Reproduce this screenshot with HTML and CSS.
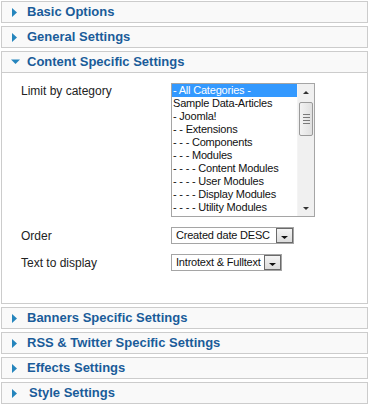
FILE: index.html
```html
<!DOCTYPE html>
<html lang="en">
<head>
  <meta charset="UTF-8">
  <title>Module Parameters</title>
  <link rel="stylesheet" href="styles.css">
</head>
<body>
  <div class="sliders">
    <div class="panel">
      <h3 class="toggler">
        <svg class="arrow" width="16" height="20" viewBox="0 0 16 20"><polygon points="1,6 6,10.5 1,15"/></svg>
        <span class="title">Basic Options</span>
      </h3>
    </div>
    <div class="panel">
      <h3 class="toggler">
        <svg class="arrow" width="16" height="20" viewBox="0 0 16 20"><polygon points="1,6 6,10.5 1,15"/></svg>
        <span class="title">General Settings</span>
      </h3>
    </div>
    <div class="panel open">
      <h3 class="toggler">
        <svg class="arrow" width="16" height="20" viewBox="0 0 16 20"><polygon points="0,7.5 9,7.5 4.5,12"/></svg>
        <span class="title">Content Specific Settings</span>
      </h3>
      <div class="pane">
        <div class="params">
          <label class="param-label param-top">Limit by category</label>
          <div class="listbox">
            <ul class="list">
              <li class="selected">- All Categories -</li>
              <li>Sample Data-Articles</li>
              <li>- Joomla!</li>
              <li>- - Extensions</li>
              <li>- - - Components</li>
              <li>- - - Modules</li>
              <li>- - - - Content Modules</li>
              <li>- - - - User Modules</li>
              <li>- - - - Display Modules</li>
              <li>- - - - Utility Modules</li>
            </ul>
            <div class="scrollbar">
              <div class="sb-btn">
                <svg width="16" height="16" viewBox="0 0 16 16"><polygon points="5,10 11,10 8,7"/></svg>
              </div>
              <div class="sb-thumb">
                <span class="grip"></span>
                <span class="grip"></span>
                <span class="grip"></span>
                <span class="grip"></span>
              </div>
              <div class="sb-track"></div>
              <div class="sb-btn">
                <svg width="16" height="16" viewBox="0 0 16 16"><polygon points="5,7 11,7 8,10"/></svg>
              </div>
            </div>
          </div>

          <label class="param-label">Order</label>
          <div class="dropdown dd-order">
            <span class="dd-text">Created date DESC</span>
            <span class="dd-btn"><svg width="15" height="13" viewBox="0 0 15 13"><polygon points="4,7 11,7 7.5,10"/></svg></span>
          </div>

          <label class="param-label">Text to display</label>
          <div class="dropdown dd-text-display">
            <span class="dd-text">Introtext &amp; Fulltext</span>
            <span class="dd-btn"><svg width="15" height="13" viewBox="0 0 15 13"><polygon points="4,7 11,7 7.5,10"/></svg></span>
          </div>
        </div>
      </div>
    </div>
    <div class="panel">
      <h3 class="toggler">
        <svg class="arrow" width="16" height="20" viewBox="0 0 16 20"><polygon points="1,6 6,10.5 1,15"/></svg>
        <span class="title">Banners Specific Settings</span>
      </h3>
    </div>
    <div class="panel">
      <h3 class="toggler">
        <svg class="arrow" width="16" height="20" viewBox="0 0 16 20"><polygon points="1,6 6,10.5 1,15"/></svg>
        <span class="title">RSS &amp; Twitter Specific Settings</span>
      </h3>
    </div>
    <div class="panel">
      <h3 class="toggler">
        <svg class="arrow" width="16" height="20" viewBox="0 0 16 20"><polygon points="1,6 6,10.5 1,15"/></svg>
        <span class="title">Effects Settings</span>
      </h3>
    </div>
    <div class="panel">
      <h3 class="toggler">
        <svg class="arrow" width="16" height="20" viewBox="0 0 16 20"><polygon points="1,6 6,10.5 1,15"/></svg>
        <span class="title title-style">Style Settings</span>
      </h3>
    </div>
  </div>
</body>
</html>
```

FILE: styles.css
```css
body {
  margin: 0;
  padding: 1px 0 0 1px;
  background: #fff;
  font-family: "Liberation Sans", Arial, sans-serif;
}

.sliders {
  width: 367px;
}

.panel {
  border: 1px solid #cccccc;
  margin-bottom: 3px;
  background: #fff;
}

.toggler {
  display: flex;
  align-items: center;
  height: 20px;
  margin: 0;
  padding-left: 9px;
  background: #f9f9f9;
  cursor: pointer;
}

.panel.open .toggler {
  border-bottom: 1px solid #cccccc;
}

.arrow {
  display: block;
  flex: none;
  width: 16px;
  height: 20px;
  fill: #2585bd;
}

.title {
  font-size: 13px;
  font-weight: bold;
  line-height: 20px;
  color: #1a5c99;
}

.title-style {
  margin-left: 2px;
}

.pane {
  padding: 10px 0 32px 19px;
}

.params {
  display: grid;
  grid-template-columns: 150px auto;
  row-gap: 10px;
  align-items: center;
  justify-items: start;
}

.param-label {
  font-size: 12px;
  line-height: 14px;
  color: #222;
}

.param-top {
  align-self: start;
  margin-top: 1px;
}

.listbox {
  display: flex;
  width: 144px;
  height: 134px;
  box-sizing: border-box;
  border: 1px solid #a5a5a5;
  background: #fff;
}

.list {
  flex: 1;
  margin: 0;
  padding: 0;
  list-style: none;
  overflow: hidden;
}

.list li {
  height: 13px;
  padding-left: 1px;
  font-size: 11px;
  line-height: 13px;
  letter-spacing: -0.2px;
  color: #111;
  white-space: nowrap;
}

.list li.selected {
  background: #3399ff;
  color: #fff;
}

.scrollbar {
  display: flex;
  flex-direction: column;
  width: 16px;
  background: #f0f0f0;
  border-left: 1px solid #f4f4f4;
}

.sb-btn {
  height: 16px;
  flex: none;
}

.sb-btn svg {
  display: block;
  fill: #333;
}

.sb-thumb {
  display: flex;
  flex-direction: column;
  justify-content: center;
  align-items: center;
  gap: 2px;
  height: 34px;
  margin: 2px 1px 0 1px;
  box-sizing: border-box;
  border: 1px solid #9a9a9a;
  border-radius: 2px;
  background: linear-gradient(to right, #f3f3f3, #e0e0e0);
}

.grip {
  display: block;
  width: 7px;
  height: 1px;
  background: #7a7a7a;
}

.sb-track {
  flex: 1;
}

.dropdown {
  display: flex;
  align-items: center;
  height: 17px;
  box-sizing: border-box;
  border: 1px solid #a5a5a5;
  background: #fff;
}

.dd-order {
  width: 123px;
}

.dd-text-display {
  width: 111px;
}

.dd-text {
  flex: 1;
  padding-left: 4px;
  font-size: 11px;
  line-height: 15px;
  letter-spacing: -0.2px;
  color: #111;
  white-space: nowrap;
}

.dd-btn {
  display: block;
  width: 17px;
  height: 15px;
  box-sizing: border-box;
  border: 1px solid #6a6a6a;
  background: linear-gradient(#f4f4f4, #dcdcdc);
}

.dd-btn svg {
  display: block;
  fill: #111;
}
```
